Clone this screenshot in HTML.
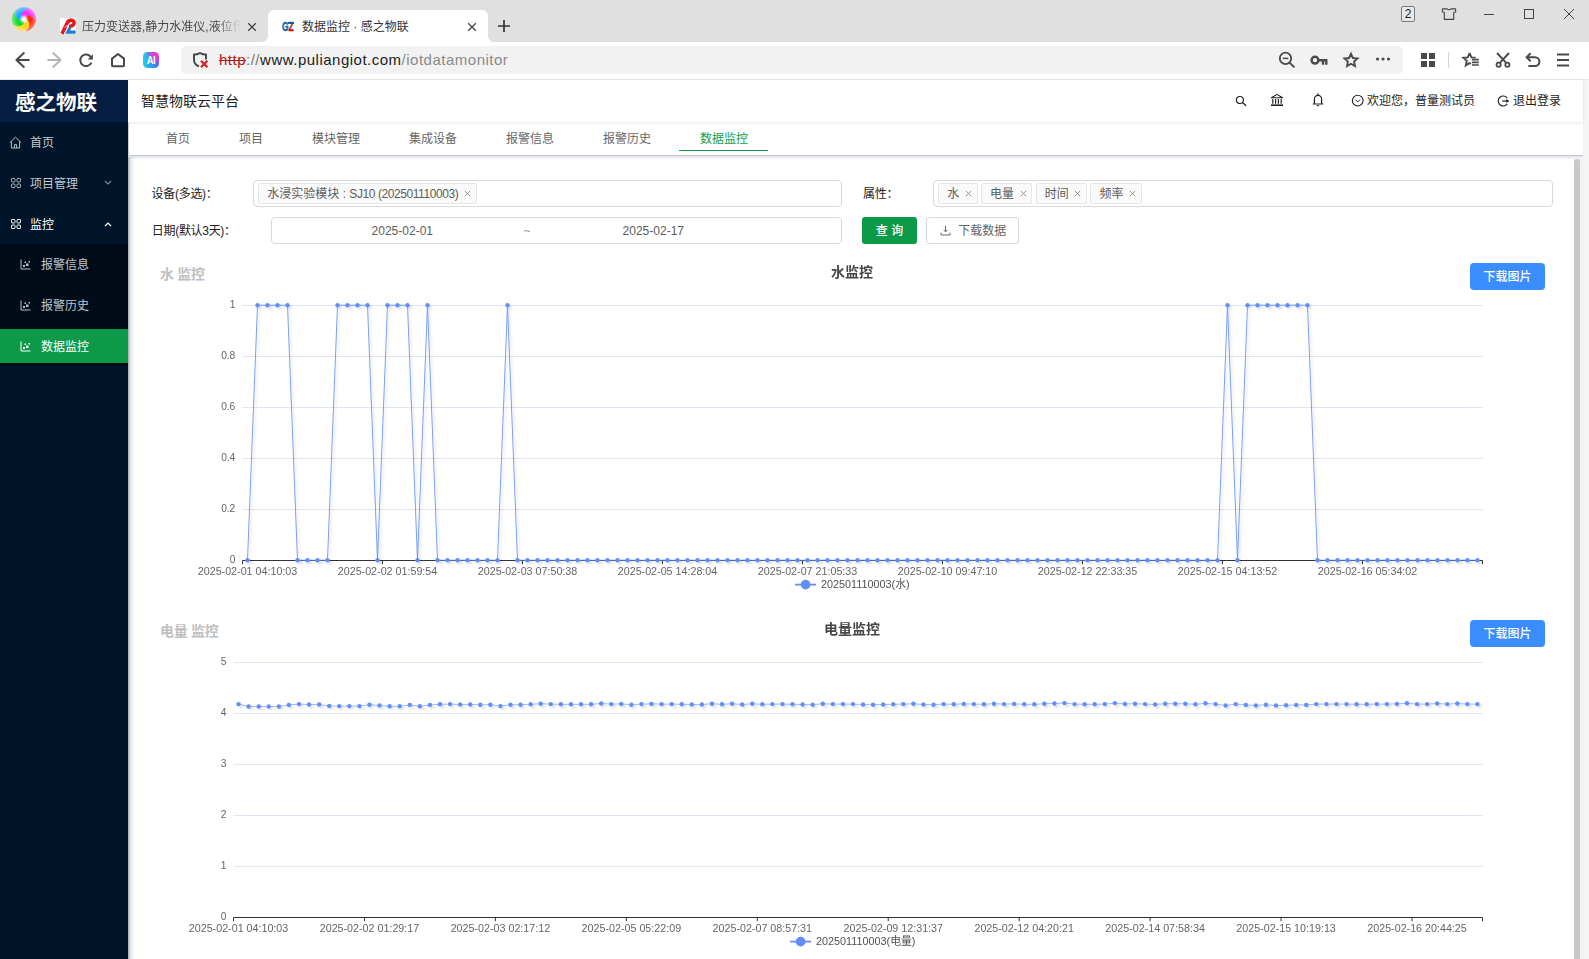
<!DOCTYPE html>
<html lang="zh-CN">
<head>
<meta charset="utf-8">
<title>数据监控 · 感之物联</title>
<style>
*{box-sizing:border-box;margin:0;padding:0}
html,body{width:1589px;height:959px;overflow:hidden;background:#fff}
body{position:relative;font-family:"Liberation Sans","Noto Sans CJK SC",sans-serif;font-size:12px;color:#333}
.t{position:absolute;white-space:nowrap}
.abs{position:absolute}
svg{position:absolute;overflow:visible}
.ax{font-family:"Liberation Sans","Noto Sans CJK SC",sans-serif;font-size:10.2px;fill:#656565}
.ttl{font-family:"Liberation Sans","Noto Sans CJK SC",sans-serif;font-size:14px;font-weight:bold;fill:#464646}
.lg{font-family:"Liberation Sans","Noto Sans CJK SC",sans-serif;font-size:10.8px;fill:#505050}
.tag{position:absolute;top:183px;height:21px;border:1px solid #e6e6e6;background:#fafafa;border-radius:2px}
.tg{top:184.2px;height:20px;line-height:20px;color:#5c5c5c}
.lb{height:20px;line-height:20px;color:#222;letter-spacing:-0.3px}
.inp{position:absolute;border:1px solid #d9d9d9;border-radius:4px;background:#fff}
</style>
</head>
<body>
<!-- ================= browser chrome ================= -->
<div class="abs" id="tabbar" style="left:0;top:0;width:1589px;height:42px;background:#e0e0e0"></div>
<div class="abs" id="toolbar" style="left:0;top:42px;width:1589px;height:38px;background:#fff;border-bottom:1px solid #e4e8ec"></div>
<!-- active tab -->
<div class="abs" style="left:268px;top:10px;width:220px;height:32px;background:#fff;border-radius:6px 6px 0 0"></div>
<svg style="left:262px;top:36px" width="6" height="6"><path d="M6 0 V6 H0 A6 6 0 0 0 6 0Z" fill="#fff"/></svg>
<svg style="left:488px;top:36px" width="6" height="6"><path d="M0 0 V6 H6 A6 6 0 0 1 0 0Z" fill="#fff"/></svg>
<!-- browser logo -->
<svg style="left:11.6px;top:7.2px" width="24" height="24" viewBox="0 0 24 24"><defs><filter id="lb" x="-20%" y="-20%" width="140%" height="140%"><feGaussianBlur stdDeviation="0.5"/></filter><filter id="lb2" x="-50%" y="-50%" width="200%" height="200%"><feGaussianBlur stdDeviation="0.9"/></filter><radialGradient id="lg"><stop offset="0.55" stop-color="#fff" stop-opacity="0"/><stop offset="1" stop-color="#fff" stop-opacity="0.38"/></radialGradient></defs><g filter="url(#lb)"><path d="M10.96 12.80 L9.89 13.17 L8.95 13.27 L8.06 13.18 L7.20 12.92 L6.39 12.52 L5.65 11.96 L4.98 11.28 L4.41 10.47 L3.94 9.55 L3.60 8.54 L3.39 7.44 L3.33 6.29 L3.41 5.08 L3.66 3.86 L5.06 2.65 L6.64 1.69 L8.35 0.98 L10.15 0.55 L12.00 0.40 L13.85 0.55 L15.65 0.98 L17.36 1.69 L16.11 1.83 L14.94 2.12 L13.86 2.54 L12.89 3.08 L12.03 3.72 L11.30 4.44 L10.71 5.24 L10.26 6.08 L9.97 6.96 L9.83 7.86 L9.85 8.75 L10.04 9.63 L10.43 10.49 L11.11 11.40Z" fill="#1fa6ff" stroke="#1fa6ff" stroke-width="0.3"/><path d="M11.11 11.40 L10.43 10.49 L10.04 9.63 L9.85 8.75 L9.83 7.86 L9.97 6.96 L10.26 6.08 L10.71 5.24 L11.30 4.44 L12.03 3.72 L12.89 3.08 L13.86 2.54 L14.94 2.12 L16.11 1.83 L17.36 1.69 L18.94 2.65 L20.34 3.86 L21.55 5.26 L22.51 6.84 L23.22 8.55 L23.65 10.35 L23.80 12.20 L23.65 14.05 L23.13 12.91 L22.49 11.89 L21.76 10.99 L20.95 10.23 L20.08 9.61 L19.16 9.14 L18.22 8.82 L17.28 8.66 L16.35 8.65 L15.46 8.79 L14.61 9.09 L13.84 9.55 L13.14 10.17 L12.49 11.10Z" fill="#f030f5" stroke="#f030f5" stroke-width="0.3"/><path d="M12.49 11.10 L13.14 10.17 L13.84 9.55 L14.61 9.09 L15.46 8.79 L16.35 8.65 L17.28 8.66 L18.22 8.82 L19.16 9.14 L20.08 9.61 L20.95 10.23 L21.76 10.99 L22.49 11.89 L23.13 12.91 L23.65 14.05 L23.22 15.85 L22.51 17.56 L21.55 19.14 L20.34 20.54 L18.94 21.75 L17.36 22.71 L15.65 23.42 L13.85 23.85 L14.77 23.00 L15.54 22.08 L16.17 21.11 L16.64 20.10 L16.96 19.08 L17.12 18.06 L17.14 17.07 L17.00 16.13 L16.72 15.24 L16.31 14.44 L15.76 13.73 L15.09 13.13 L14.28 12.66 L13.19 12.33Z" fill="#ff2415" stroke="#ff2415" stroke-width="0.3"/><path d="M13.19 12.33 L14.28 12.66 L15.09 13.13 L15.76 13.73 L16.31 14.44 L16.72 15.24 L17.00 16.13 L17.14 17.07 L17.12 18.06 L16.96 19.08 L16.64 20.10 L16.17 21.11 L15.54 22.08 L14.77 23.00 L13.85 23.85 L12.00 24.00 L10.15 23.85 L8.35 23.42 L6.64 22.71 L5.06 21.75 L3.66 20.54 L2.45 19.14 L1.49 17.56 L2.58 18.17 L3.70 18.62 L4.82 18.92 L5.92 19.06 L6.99 19.04 L8.01 18.89 L8.95 18.59 L9.81 18.17 L10.57 17.63 L11.20 16.99 L11.71 16.25 L12.07 15.43 L12.27 14.51 L12.25 13.37Z" fill="#ffd21a" stroke="#ffd21a" stroke-width="0.3"/><path d="M12.25 13.37 L12.27 14.51 L12.07 15.43 L11.71 16.25 L11.20 16.99 L10.57 17.63 L9.81 18.17 L8.95 18.59 L8.01 18.89 L6.99 19.04 L5.92 19.06 L4.82 18.92 L3.70 18.62 L2.58 18.17 L1.49 17.56 L0.78 15.85 L0.35 14.05 L0.20 12.20 L0.35 10.35 L0.78 8.55 L1.49 6.84 L2.45 5.26 L3.66 3.86 L3.41 5.08 L3.33 6.29 L3.39 7.44 L3.60 8.54 L3.94 9.55 L4.41 10.47 L4.98 11.28 L5.65 11.96 L6.39 12.52 L7.20 12.92 L8.06 13.18 L8.95 13.27 L9.89 13.17 L10.96 12.80Z" fill="#10dc25" stroke="#10dc25" stroke-width="0.3"/><circle cx="12" cy="12.2" r="11.9" fill="url(#lg)"/></g><circle cx="12" cy="12.2" r="3.1" fill="#fff" filter="url(#lb2)"/><circle cx="12" cy="12.2" r="1.7" fill="#fff"/></svg>
<!-- inactive tab -->
<svg style="left:60px;top:18px" width="16" height="16" viewBox="0 0 16 16"><rect width="16" height="16" fill="#fff"/><path d="M2 15.8 L6.9 5.4 C8 3 9.8 2 11.8 2.3 C14.2 2.7 14.7 4.8 13.6 6.4 C12.6 7.9 10.9 8.3 9 8.2" stroke="#e8141c" stroke-width="3.5" fill="none"/><path d="M4.6 9.3 L9.4 6.4" stroke="#fff" stroke-width="0.8"/><path d="M8.2 9.6 L11.6 9.6 L10.2 12.6 H15.6 V15.8 H5.2 Z" fill="#1b7fd6"/></svg>
<div class="t" style="left:82px;top:17px;height:20px;line-height:20px;font-size:12px;color:#4a4a4a;width:159px;overflow:hidden;-webkit-mask-image:linear-gradient(90deg,#000 0,#000 135px,transparent 159px);mask-image:linear-gradient(90deg,#000 0,#000 135px,transparent 159px)">压力变送器,静力水准仪,液位传感器</div>
<svg style="left:247px;top:22px" width="10" height="10" viewBox="0 0 10 10"><path d="M1.2 1.2 L8.8 8.8 M8.8 1.2 L1.2 8.8" stroke="#444" stroke-width="1.3" fill="none"/></svg>
<!-- active tab contents -->
<div class="t" style="left:281.8px;top:18px;height:16px;line-height:16px;font-size:12.4px;font-weight:bold;transform:translateY(0.9px) scaleX(0.68);transform-origin:0 50%;-webkit-text-stroke:0.5px currentColor"><span style="color:#0e64a8">G</span><span style="color:#cc0d0d">Z</span></div><div class="abs" style="left:288px;top:21.6px;width:6px;height:2px;background:#0e64a8"></div>
<div class="t" style="left:302px;top:17px;height:20px;line-height:20px;font-size:12px;color:#333">数据监控 · 感之物联</div>
<svg style="left:467px;top:22px" width="10" height="10" viewBox="0 0 10 10"><path d="M1.2 1.2 L8.8 8.8 M8.8 1.2 L1.2 8.8" stroke="#444" stroke-width="1.3" fill="none"/></svg>
<svg style="left:497px;top:19px" width="14" height="14" viewBox="0 0 14 14"><path d="M7 1 V13 M1 7 H13" stroke="#333" stroke-width="1.7" fill="none"/></svg>
<!-- window controls -->
<div class="abs" style="left:1401px;top:6px;width:14px;height:16px;border:1px solid #7a7a7a;border-radius:2px;background:#e8e8e8"></div>
<div class="t" style="left:1401px;top:6px;width:14px;height:16px;line-height:16px;font-size:12px;text-align:center;color:#222">2</div>
<svg style="left:1441px;top:7px" width="16" height="14" viewBox="0 0 16 14"><path d="M1.5 1.9 H6 Q8 3.7 10 1.9 H14.5 L14.7 5 L12.7 5.2 V12.4 H3.3 V5.2 L1.3 5 Z" fill="none" stroke="#444" stroke-width="1.1" stroke-linejoin="round"/></svg>
<svg style="left:1483px;top:8px" width="12" height="12" viewBox="0 0 12 12"><path d="M1 6.5 H11" stroke="#444" stroke-width="1"/></svg>
<svg style="left:1523px;top:8px" width="12" height="12" viewBox="0 0 12 12"><rect x="1.5" y="1.5" width="9" height="9" fill="none" stroke="#444" stroke-width="1"/></svg>
<svg style="left:1563px;top:8px" width="12" height="12" viewBox="0 0 12 12"><path d="M1 1 L11 11 M11 1 L1 11" stroke="#444" stroke-width="1" fill="none"/></svg>
<!-- toolbar nav icons -->
<svg style="left:13.7px;top:51px" width="18" height="18" viewBox="0 0 18 18"><path d="M10.4 1.6 L2.4 9 L10.4 16.4 M2.8 9 H15.6" stroke="#484848" stroke-width="2" fill="none" stroke-linejoin="round"/></svg>
<svg style="left:45px;top:51px" width="18" height="18" viewBox="0 0 18 18"><path d="M7.6 1.6 L15.6 9 L7.6 16.4 M15.2 9 H2.4" stroke="#b4b4b4" stroke-width="2" fill="none" stroke-linejoin="round"/></svg>
<svg style="left:77px;top:51.6px" width="18" height="18" viewBox="0 0 18 18"><path d="M14 5.2 A5.8 5.8 0 1 0 14.4 10.6" stroke="#484848" stroke-width="2" fill="none"/><path d="M15.9 2.2 V7.4 H10.7 Z" fill="#484848"/></svg>
<svg style="left:109px;top:51px" width="18" height="18" viewBox="0 0 18 18"><path d="M3 14.4 V7.6 L9 3 L15 7.6 V14.4 Q15 15.2 14.2 15.2 H3.8 Q3 15.2 3 14.4 Z" stroke="#484848" stroke-width="2" fill="none" stroke-linejoin="round"/></svg>
<div class="abs" style="left:143px;top:52px;width:16px;height:16px;border-radius:4.5px;background:radial-gradient(circle at 100% 0%,#ff3f86 0%,#dd3fd2 28%,rgba(130,90,250,0) 62%),linear-gradient(90deg,#1fd2e8 0%,#28a6f2 45%,#4068f8 100%)"></div>
<div class="t" style="left:143px;top:52px;width:16px;height:16px;line-height:16px;font-size:10.5px;font-weight:bold;color:#fff;text-align:center;letter-spacing:-0.4px;transform:translateY(0.2px) scaleX(0.9)">AI</div>
<!-- address bar -->
<div class="abs" style="left:181px;top:46px;width:1222px;height:28px;background:#f2f2f2;border-radius:5px"></div>
<svg style="left:191px;top:51px" width="20" height="18" viewBox="0 0 20 18"><path d="M9 1.8 Q5.8 3.8 3 3.6 V8.4 C3 11.8 5.2 14.4 8 15.4 M9 1.8 Q12.2 3.8 15 3.6 V8.4" stroke="#4a4a4a" stroke-width="2" fill="none" stroke-linejoin="round"/><path d="M10 9.8 L16.4 16.2 M16.4 9.8 L10 16.2" stroke="#d62222" stroke-width="2.3" fill="none"/></svg>
<div class="t" id="url" style="left:219px;top:49px;height:22px;line-height:22px;font-size:15px;letter-spacing:0.5px;color:#222"><span style="color:#b51717;text-decoration:line-through">http</span><span style="color:#777">://</span>www.puliangiot.com<span style="color:#8a8a8a">/iotdatamonitor</span></div>
<!-- address bar right icons -->
<svg style="left:1277px;top:50px" width="20" height="20" viewBox="0 0 20 20"><circle cx="8.5" cy="8.4" r="5.7" stroke="#4a4a4a" stroke-width="1.8" fill="none"/><path d="M12.6 12.6 L17.4 17.4" stroke="#4a4a4a" stroke-width="2"/><path d="M5.8 8.4 H11.2" stroke="#4a4a4a" stroke-width="1.5"/></svg>
<svg style="left:1310px;top:53px" width="18" height="14" viewBox="0 0 18 14"><circle cx="5" cy="7.2" r="3.4" stroke="#4a4a4a" stroke-width="2.5" fill="none"/><path d="M8.4 7.2 H17.4 M13 7.2 V11.8 M16.3 7.2 V11.8" stroke="#4a4a4a" stroke-width="2.4" fill="none"/></svg>
<svg style="left:1342px;top:50.6px" width="18" height="18" viewBox="0 0 18 18"><path d="M9 2.8 L10.9 7 L15.5 7.5 L12.1 10.6 L13 15.1 L9 12.8 L5 15.1 L5.9 10.6 L2.5 7.5 L7.1 7 Z" stroke="#4a4a4a" stroke-width="1.9" fill="none" stroke-linejoin="miter"/></svg>
<svg style="left:1375px;top:56.4px" width="16" height="6" viewBox="0 0 16 6"><circle cx="2.5" cy="3" r="1.55" fill="#4a4a4a"/><circle cx="8" cy="3" r="1.55" fill="#4a4a4a"/><circle cx="13.5" cy="3" r="1.55" fill="#4a4a4a"/></svg>
<!-- toolbar right icons -->
<svg style="left:1421px;top:53px" width="14" height="14" viewBox="0 0 14 14"><rect x="0" y="0" width="6" height="6" fill="#4a4a4a"/><rect x="8" y="0" width="6" height="6" fill="#4a4a4a"/><rect x="0" y="8" width="6" height="6" fill="#4a4a4a"/><rect x="8" y="8" width="6" height="6" fill="#4a4a4a"/></svg>
<div class="abs" style="left:1448px;top:52px;width:1px;height:16px;background:#d4d4d4"></div>
<svg style="left:1462px;top:51px" width="18" height="18" viewBox="0 0 18 18"><path d="M7.6 2 L9.4 6.4 L13.6 6.6 M7.6 2 L5.8 6.4 L1.4 6.8 L4.8 9.8 L3.8 14.4 L7.6 12 L9 12.8" stroke="#4a4a4a" stroke-width="1.9" fill="none" stroke-linejoin="miter"/><path d="M10 8.6 H16.8 M10 11.3 H16.8 M10 14 H16.8" stroke="#4a4a4a" stroke-width="1.7"/></svg>
<svg style="left:1495px;top:52px" width="16" height="16" viewBox="0 0 16 16"><path d="M2 1 L11.4 11.2 M14 1 L4.6 11.2" stroke="#4a4a4a" stroke-width="1.9" fill="none"/><circle cx="3.6" cy="12.8" r="2.1" stroke="#4a4a4a" stroke-width="1.8" fill="none"/><circle cx="12.4" cy="12.8" r="2.1" stroke="#4a4a4a" stroke-width="1.8" fill="none"/></svg>
<svg style="left:1525px;top:52px" width="16" height="16" viewBox="0 0 16 16"><path d="M2.4 5.2 H10 A4.4 4.4 0 0 1 10 14 H3.4" stroke="#4a4a4a" stroke-width="2" fill="none"/><path d="M5.6 1.2 L1.6 5.2 L5.6 9.2" stroke="#4a4a4a" stroke-width="2" fill="none"/></svg>
<svg style="left:1556px;top:53px" width="14" height="14" viewBox="0 0 14 14"><path d="M1 1.5 H13 M1 7 H13 M1 12.5 H13" stroke="#4a4a4a" stroke-width="2"/></svg>

<!-- ================= page ================= -->
<div class="abs" style="left:128px;top:80px;width:1455px;height:879px;background:#f0f2f5"></div>
<div class="abs" style="left:1583px;top:80px;width:6px;height:879px;background:#f5f5f5"></div>
<!-- content card -->
<div class="abs" style="left:130px;top:159px;width:1444px;height:800px;background:#fff"></div>
<!-- scrollbar thumb -->
<div class="abs" style="left:1574px;top:159px;width:6px;height:800px;background:#c8c8c8;border-radius:3px 3px 0 0"></div>
<!-- tab bar -->
<div class="abs" style="left:128px;top:122px;width:1455px;height:34px;background:#fff;border-bottom:1px solid #c6c9cd;box-shadow:0 1px 1px rgba(0,0,0,.06)"></div>
<div class="abs" style="left:128px;top:123px;width:1px;height:33px;background:#c9ccd0"></div>
<!-- header -->
<div class="abs" style="left:128px;top:80px;width:1455px;height:42px;background:#fff;box-shadow:0 1px 3px rgba(0,21,41,.10)"></div>
<div class="t" style="left:141px;top:91px;height:20px;line-height:20px;font-size:14px;color:#222">智慧物联云平台</div>
<!-- header icons -->
<svg style="left:1234px;top:94px" width="14" height="14" viewBox="0 0 14 14"><circle cx="5.9" cy="6" r="3.5" stroke="#222" stroke-width="1.2" fill="none"/><path d="M8.4 8.6 L12.2 11.8" stroke="#222" stroke-width="1.3"/></svg>
<svg style="left:1270px;top:93px" width="14" height="14" viewBox="0 0 14 14"><path d="M7 1.4 L12.6 4.8 H1.4 Z" fill="none" stroke="#222" stroke-width="1.1" stroke-linejoin="round"/><path d="M2.8 6 V10.8 M5.6 6 V10.8 M8.4 6 V10.8 M11.2 6 V10.8" stroke="#222" stroke-width="1.2"/><path d="M1 12.2 H13" stroke="#222" stroke-width="1.6"/></svg>
<svg style="left:1311px;top:92px" width="14" height="16" viewBox="0 0 14 16"><path d="M3.4 11.6 V7 A3.6 3.6 0 0 1 10.6 7 V11.6 M1.8 12 H12.2" stroke="#222" stroke-width="1.2" fill="none"/><path d="M5.4 13 L7 14.6 L8.6 13 Z" fill="#222"/><path d="M7 1.6 V3.4" stroke="#222" stroke-width="1.4"/></svg>
<svg style="left:1351px;top:94px" width="14" height="14" viewBox="0 0 14 14"><circle cx="6.7" cy="6.6" r="5.4" stroke="#222" stroke-width="1.1" fill="none"/><path d="M4.5 5.6 L6.7 8 L9 5.6" stroke="#222" stroke-width="1" fill="none"/></svg>
<div class="t" style="left:1367px;top:91px;height:20px;line-height:20px;font-size:12px;color:#222">欢迎您，普量测试员</div>
<svg style="left:1497px;top:94.6px" width="14" height="12" viewBox="0 0 14 12"><path d="M10.3 3.1 A5 5 0 1 0 10.3 8.9" stroke="#222" stroke-width="1.15" fill="none"/><path d="M5.2 6 H10" stroke="#222" stroke-width="1.2"/><path d="M9.4 4 L12.4 6 L9.4 8 Z" fill="#222"/></svg>
<div class="t" style="left:1513px;top:91px;height:20px;line-height:20px;font-size:12px;color:#222">退出登录</div>
<!-- page tabs -->
<div class="t" style="left:166px;top:129px;transform:translateY(0.35px);height:20px;line-height:20px;color:#666">首页</div>
<div class="t" style="left:239px;top:129px;transform:translateY(0.35px);height:20px;line-height:20px;color:#666">项目</div>
<div class="t" style="left:312px;top:129px;transform:translateY(0.35px);height:20px;line-height:20px;color:#666">模块管理</div>
<div class="t" style="left:409px;top:129px;transform:translateY(0.35px);height:20px;line-height:20px;color:#666">集成设备</div>
<div class="t" style="left:506px;top:129px;transform:translateY(0.35px);height:20px;line-height:20px;color:#666">报警信息</div>
<div class="t" style="left:603px;top:129px;transform:translateY(0.35px);height:20px;line-height:20px;color:#666">报警历史</div>
<div class="t" style="left:700px;top:129px;transform:translateY(0.35px);height:20px;line-height:20px;color:#0e9e4b">数据监控</div>
<div class="abs" style="left:679px;top:150px;width:89px;height:1px;background:#0e9e4b"></div>

<!-- sidebar -->
<div class="abs" style="left:0;top:80px;width:128px;height:879px;background:#001529"></div>
<div class="abs" style="left:128px;top:157px;width:7px;height:802px;background:linear-gradient(90deg,rgba(0,21,41,.30),rgba(0,21,41,.10) 35%,rgba(0,21,41,0))"></div>
<div class="abs" style="left:0;top:80px;width:128px;height:42px;background:#051e41"></div>
<div class="t" style="left:15px;top:89px;height:28px;line-height:28px;font-size:20.5px;font-weight:bold;color:#fff">感之物联</div>
<div class="abs" style="left:0;top:244px;width:128px;height:122px;background:#000c17"></div>
<div class="abs" style="left:0;top:329px;width:128px;height:34px;background:#0c9a48"></div>
<!-- sidebar icons -->
<svg style="left:9.2px;top:136.2px" width="13" height="13" viewBox="0 0 13 13"><path d="M0.8 6.6 L6.5 1.2 L12.2 6.6 M2.4 5.6 V12 H10.6 V5.6 M5.4 12 V8.6 H7.6 V12" stroke="#b7bdc6" stroke-width="1" fill="none"/></svg>
<svg style="left:11px;top:178px" width="10" height="10" viewBox="0 0 10 10"><rect x=".5" y=".5" width="3.5" height="3.5" rx=".6" stroke="#a9b0b9" fill="none"/><rect x="6" y=".5" width="3.5" height="3.5" rx=".6" stroke="#a9b0b9" fill="none"/><rect x=".5" y="6" width="3.5" height="3.5" rx=".6" stroke="#a9b0b9" fill="none"/><rect x="6" y="6" width="3.5" height="3.5" rx=".6" stroke="#a9b0b9" fill="none"/></svg>
<svg style="left:11px;top:219px" width="10" height="10" viewBox="0 0 10 10"><rect x=".5" y=".5" width="3.5" height="3.5" rx=".6" stroke="#fff" fill="none"/><rect x="6" y=".5" width="3.5" height="3.5" rx=".6" stroke="#fff" fill="none"/><rect x=".5" y="6" width="3.5" height="3.5" rx=".6" stroke="#fff" fill="none"/><rect x="6" y="6" width="3.5" height="3.5" rx=".6" stroke="#fff" fill="none"/></svg>
<div class="t" style="left:30px;top:132.9px;height:20px;line-height:20px;color:#c3c8cf">首页</div>
<div class="t" style="left:30px;top:173.9px;height:20px;line-height:20px;color:#c3c8cf">项目管理</div>
<div class="t" style="left:30px;top:214.9px;height:20px;line-height:20px;color:#fff">监控</div>
<svg style="left:103.5px;top:180px" width="8" height="6" viewBox="0 0 8 6"><path d="M1 1 L4 4 L7 1" stroke="#7f8995" stroke-width="1.2" fill="none"/></svg>
<svg style="left:103.5px;top:220.5px" width="8" height="6" viewBox="0 0 8 6"><path d="M1 5 L4 2 L7 5" stroke="#fff" stroke-width="1.2" fill="none"/></svg>
<svg style="left:20px;top:259px" width="11" height="11" viewBox="0 0 11 11"><path d="M1 .5 V10 H10.5" stroke="#b7bdc6" stroke-width="1" fill="none"/><rect x="3" y="6" width="2" height="2" fill="#b7bdc6"/><rect x="6" y="4.5" width="2.5" height="2.5" fill="#b7bdc6"/><rect x="4.5" y="2.5" width="1.5" height="1.5" fill="#b7bdc6"/><rect x="8.5" y="2" width="1.5" height="1.5" fill="#b7bdc6"/></svg>
<svg style="left:20px;top:300px" width="11" height="11" viewBox="0 0 11 11"><path d="M1 .5 V10 H10.5" stroke="#b7bdc6" stroke-width="1" fill="none"/><rect x="3" y="6" width="2" height="2" fill="#b7bdc6"/><rect x="6" y="4.5" width="2.5" height="2.5" fill="#b7bdc6"/><rect x="4.5" y="2.5" width="1.5" height="1.5" fill="#b7bdc6"/><rect x="8.5" y="2" width="1.5" height="1.5" fill="#b7bdc6"/></svg>
<svg style="left:20px;top:341px" width="11" height="11" viewBox="0 0 11 11"><path d="M1 .5 V10 H10.5" stroke="#fff" stroke-width="1" fill="none"/><rect x="3" y="6" width="2" height="2" fill="#fff"/><rect x="6" y="4.5" width="2.5" height="2.5" fill="#fff"/><rect x="4.5" y="2.5" width="1.5" height="1.5" fill="#fff"/><rect x="8.5" y="2" width="1.5" height="1.5" fill="#fff"/></svg>
<div class="t" style="left:41px;top:255.1px;height:20px;line-height:20px;color:#c3c8cf">报警信息</div>
<div class="t" style="left:41px;top:296.1px;height:20px;line-height:20px;color:#c3c8cf">报警历史</div>
<div class="t" style="left:41px;top:337.1px;height:20px;line-height:20px;color:#fff">数据监控</div>

<!-- ================= form ================= -->
<div class="t lb" style="left:151.6px;top:184px">设备(多选)：</div>
<div class="inp" style="left:253px;top:180px;width:589px;height:26.5px"></div>
<div class="tag" style="left:258.3px;width:218.5px"></div><div class="t tg" style="left:267.3px">水浸实验模块 : <span id="sj" style="letter-spacing:-0.42px">SJ10 (202501110003)</span></div><svg style="left:463.6px;top:190.1px" width="7" height="7" viewBox="0 0 7 7"><path d="M.8 .8 L6.2 6.2 M6.2 .8 L.8 6.2" stroke="#8a8a8a" stroke-width="0.9" fill="none"/></svg>
<div class="t lb" style="left:151.8px;top:221px">日期(默认3天)：</div>
<div class="inp" style="left:271px;top:217px;width:571px;height:27px"></div>
<div class="t" style="left:352.3px;top:220.6px;width:100px;height:20px;line-height:20px;text-align:center;color:#5c5c5c">2025-02-01</div>
<div class="t" style="left:517px;top:220.6px;width:20px;height:20px;line-height:20px;text-align:center;color:#999">~</div>
<div class="t" style="left:603.3px;top:220.6px;width:100px;height:20px;line-height:20px;text-align:center;color:#5c5c5c">2025-02-17</div>
<div class="t lb" style="left:863px;top:184px">属性：</div>
<div class="inp" style="left:933px;top:180px;width:620px;height:26.5px"></div>
<div class="tag" style="left:938.3px;width:39.3px"></div><div class="t tg" style="left:947.2px">水</div><svg style="left:964.6px;top:190.1px" width="7" height="7" viewBox="0 0 7 7"><path d="M.8 .8 L6.2 6.2 M6.2 .8 L.8 6.2" stroke="#8a8a8a" stroke-width="0.9" fill="none"/></svg>
<div class="tag" style="left:981.4px;width:50.6px"></div><div class="t tg" style="left:990px">电量</div><svg style="left:1019.7px;top:190.1px" width="7" height="7" viewBox="0 0 7 7"><path d="M.8 .8 L6.2 6.2 M6.2 .8 L.8 6.2" stroke="#8a8a8a" stroke-width="0.9" fill="none"/></svg>
<div class="tag" style="left:1036.2px;width:50.7px"></div><div class="t tg" style="left:1044.8px">时间</div><svg style="left:1073.5px;top:190.1px" width="7" height="7" viewBox="0 0 7 7"><path d="M.8 .8 L6.2 6.2 M6.2 .8 L.8 6.2" stroke="#8a8a8a" stroke-width="0.9" fill="none"/></svg>
<div class="tag" style="left:1090.3px;width:51.5px"></div><div class="t tg" style="left:1099.5px">频率</div><svg style="left:1128.6px;top:190.1px" width="7" height="7" viewBox="0 0 7 7"><path d="M.8 .8 L6.2 6.2 M6.2 .8 L.8 6.2" stroke="#8a8a8a" stroke-width="0.9" fill="none"/></svg>
<div class="abs" style="left:862px;top:217px;width:55px;height:27px;background:#0c9a48;border-radius:3px"></div>
<div class="t" style="left:862px;top:220.6px;width:55px;height:20px;line-height:20px;text-align:center;color:#fff;font-weight:500">查 询</div>
<div class="inp" style="left:926px;top:217px;width:93px;height:27px;border-radius:3px"></div>
<svg style="left:939.6px;top:225px" width="11" height="11" viewBox="0 0 11 11"><path d="M5.5 .8 V6.8 M3.5 4.9 L5.5 6.9 L7.5 4.9 M1 7.6 V10 H10 V7.6" stroke="#666" stroke-width="1" fill="none"/></svg>
<div class="t" style="left:958.3px;top:220.6px;height:20px;line-height:20px;color:#666">下载数据</div>

<!-- ================= charts ================= -->
<div class="t" style="left:160px;top:264px;height:20px;line-height:20px;font-size:14px;font-weight:bold;letter-spacing:-0.3px;color:#c0c0c0">水 监控</div>
<div class="t" style="left:160px;top:621px;height:20px;line-height:20px;font-size:14px;font-weight:bold;letter-spacing:-0.3px;color:#c0c0c0">电量 监控</div>
<div class="abs" style="left:1470px;top:263px;width:75px;height:27px;background:#3a8dff;border-radius:4px"></div>
<div class="t" style="left:1470px;top:266.5px;width:75px;height:20px;line-height:20px;text-align:center;color:#fff;font-weight:500">下载图片</div>
<div class="abs" style="left:1470px;top:620px;width:75px;height:27px;background:#3a8dff;border-radius:4px"></div>
<div class="t" style="left:1470px;top:623.5px;width:75px;height:20px;line-height:20px;text-align:center;color:#fff;font-weight:500">下载图片</div>
<svg style="left:0;top:0;will-change:transform" width="1589" height="959" viewBox="0 0 1589 959">
<defs><filter id="sh" x="-2%" y="-5%" width="104%" height="115%"><feDropShadow dx="2" dy="2" stdDeviation="1.1" flood-color="#000" flood-opacity="0.13"/></filter></defs>
<text x="235.3" y="562.8" text-anchor="end" class="ax">0</text>
<line x1="242.5" y1="509.5" x2="1482.5" y2="509.5" stroke="#e0e6f1" stroke-width="1"/>
<text x="235.3" y="511.8" text-anchor="end" class="ax">0.2</text>
<line x1="242.5" y1="458.5" x2="1482.5" y2="458.5" stroke="#e0e6f1" stroke-width="1"/>
<text x="235.3" y="460.8" text-anchor="end" class="ax">0.4</text>
<line x1="242.5" y1="407.5" x2="1482.5" y2="407.5" stroke="#e0e6f1" stroke-width="1"/>
<text x="235.3" y="409.8" text-anchor="end" class="ax">0.6</text>
<line x1="242.5" y1="356.5" x2="1482.5" y2="356.5" stroke="#e0e6f1" stroke-width="1"/>
<text x="235.3" y="358.8" text-anchor="end" class="ax">0.8</text>
<line x1="242.5" y1="305.5" x2="1482.5" y2="305.5" stroke="#e0e6f1" stroke-width="1"/>
<text x="235.3" y="307.8" text-anchor="end" class="ax">1</text>
<line x1="242.5" y1="560.5" x2="1482.5" y2="560.5" stroke="#333" stroke-width="1"/>
<line x1="242.50" y1="560.5" x2="242.50" y2="564.2" stroke="#333" stroke-width="1"/>
<text x="247.50" y="574.7" text-anchor="middle" class="ax" textLength="99.5" lengthAdjust="spacingAndGlyphs">2025-02-01 04:10:03</text>
<line x1="382.50" y1="560.5" x2="382.50" y2="564.2" stroke="#333" stroke-width="1"/>
<text x="387.50" y="574.7" text-anchor="middle" class="ax" textLength="99.5" lengthAdjust="spacingAndGlyphs">2025-02-02 01:59:54</text>
<line x1="522.50" y1="560.5" x2="522.50" y2="564.2" stroke="#333" stroke-width="1"/>
<text x="527.50" y="574.7" text-anchor="middle" class="ax" textLength="99.5" lengthAdjust="spacingAndGlyphs">2025-02-03 07:50:38</text>
<line x1="662.50" y1="560.5" x2="662.50" y2="564.2" stroke="#333" stroke-width="1"/>
<text x="667.50" y="574.7" text-anchor="middle" class="ax" textLength="99.5" lengthAdjust="spacingAndGlyphs">2025-02-05 14:28:04</text>
<line x1="802.50" y1="560.5" x2="802.50" y2="564.2" stroke="#333" stroke-width="1"/>
<text x="807.50" y="574.7" text-anchor="middle" class="ax" textLength="99.5" lengthAdjust="spacingAndGlyphs">2025-02-07 21:05:33</text>
<line x1="942.50" y1="560.5" x2="942.50" y2="564.2" stroke="#333" stroke-width="1"/>
<text x="947.50" y="574.7" text-anchor="middle" class="ax" textLength="99.5" lengthAdjust="spacingAndGlyphs">2025-02-10 09:47:10</text>
<line x1="1082.50" y1="560.5" x2="1082.50" y2="564.2" stroke="#333" stroke-width="1"/>
<text x="1087.50" y="574.7" text-anchor="middle" class="ax" textLength="99.5" lengthAdjust="spacingAndGlyphs">2025-02-12 22:33:35</text>
<line x1="1222.50" y1="560.5" x2="1222.50" y2="564.2" stroke="#333" stroke-width="1"/>
<text x="1227.50" y="574.7" text-anchor="middle" class="ax" textLength="99.5" lengthAdjust="spacingAndGlyphs">2025-02-15 04:13:52</text>
<line x1="1362.50" y1="560.5" x2="1362.50" y2="564.2" stroke="#333" stroke-width="1"/>
<text x="1367.50" y="574.7" text-anchor="middle" class="ax" textLength="99.5" lengthAdjust="spacingAndGlyphs">2025-02-16 05:34:02</text>
<line x1="1482.5" y1="560.5" x2="1482.5" y2="564.2" stroke="#333" stroke-width="1"/>
<g filter="url(#sh)"><polyline points="247.50,560.20 257.50,305.20 267.50,305.20 277.50,305.20 287.50,305.20 297.50,560.20 307.50,560.20 317.50,560.20 327.50,560.20 337.50,305.20 347.50,305.20 357.50,305.20 367.50,305.20 377.50,560.20 387.50,305.20 397.50,305.20 407.50,305.20 417.50,560.20 427.50,305.20 437.50,560.20 447.50,560.20 457.50,560.20 467.50,560.20 477.50,560.20 487.50,560.20 497.50,560.20 507.50,305.20 517.50,560.20 527.50,560.20 537.50,560.20 547.50,560.20 557.50,560.20 567.50,560.20 577.50,560.20 587.50,560.20 597.50,560.20 607.50,560.20 617.50,560.20 627.50,560.20 637.50,560.20 647.50,560.20 657.50,560.20 667.50,560.20 677.50,560.20 687.50,560.20 697.50,560.20 707.50,560.20 717.50,560.20 727.50,560.20 737.50,560.20 747.50,560.20 757.50,560.20 767.50,560.20 777.50,560.20 787.50,560.20 797.50,560.20 807.50,560.20 817.50,560.20 827.50,560.20 837.50,560.20 847.50,560.20 857.50,560.20 867.50,560.20 877.50,560.20 887.50,560.20 897.50,560.20 907.50,560.20 917.50,560.20 927.50,560.20 937.50,560.20 947.50,560.20 957.50,560.20 967.50,560.20 977.50,560.20 987.50,560.20 997.50,560.20 1007.50,560.20 1017.50,560.20 1027.50,560.20 1037.50,560.20 1047.50,560.20 1057.50,560.20 1067.50,560.20 1077.50,560.20 1087.50,560.20 1097.50,560.20 1107.50,560.20 1117.50,560.20 1127.50,560.20 1137.50,560.20 1147.50,560.20 1157.50,560.20 1167.50,560.20 1177.50,560.20 1187.50,560.20 1197.50,560.20 1207.50,560.20 1217.50,560.20 1227.50,305.20 1237.50,560.20 1247.50,305.20 1257.50,305.20 1267.50,305.20 1277.50,305.20 1287.50,305.20 1297.50,305.20 1307.50,305.20 1317.50,560.20 1327.50,560.20 1337.50,560.20 1347.50,560.20 1357.50,560.20 1367.50,560.20 1377.50,560.20 1387.50,560.20 1397.50,560.20 1407.50,560.20 1417.50,560.20 1427.50,560.20 1437.50,560.20 1447.50,560.20 1457.50,560.20 1467.50,560.20 1477.50,560.20" fill="none" stroke="#638ef6" stroke-width="1" stroke-opacity="0.86" stroke-linejoin="bevel"/>
<circle cx="247.50" cy="560.20" r="2.2" fill="#638ef6"/>
<circle cx="257.50" cy="305.20" r="2.2" fill="#638ef6"/>
<circle cx="267.50" cy="305.20" r="2.2" fill="#638ef6"/>
<circle cx="277.50" cy="305.20" r="2.2" fill="#638ef6"/>
<circle cx="287.50" cy="305.20" r="2.2" fill="#638ef6"/>
<circle cx="297.50" cy="560.20" r="2.2" fill="#638ef6"/>
<circle cx="307.50" cy="560.20" r="2.2" fill="#638ef6"/>
<circle cx="317.50" cy="560.20" r="2.2" fill="#638ef6"/>
<circle cx="327.50" cy="560.20" r="2.2" fill="#638ef6"/>
<circle cx="337.50" cy="305.20" r="2.2" fill="#638ef6"/>
<circle cx="347.50" cy="305.20" r="2.2" fill="#638ef6"/>
<circle cx="357.50" cy="305.20" r="2.2" fill="#638ef6"/>
<circle cx="367.50" cy="305.20" r="2.2" fill="#638ef6"/>
<circle cx="377.50" cy="560.20" r="2.2" fill="#638ef6"/>
<circle cx="387.50" cy="305.20" r="2.2" fill="#638ef6"/>
<circle cx="397.50" cy="305.20" r="2.2" fill="#638ef6"/>
<circle cx="407.50" cy="305.20" r="2.2" fill="#638ef6"/>
<circle cx="417.50" cy="560.20" r="2.2" fill="#638ef6"/>
<circle cx="427.50" cy="305.20" r="2.2" fill="#638ef6"/>
<circle cx="437.50" cy="560.20" r="2.2" fill="#638ef6"/>
<circle cx="447.50" cy="560.20" r="2.2" fill="#638ef6"/>
<circle cx="457.50" cy="560.20" r="2.2" fill="#638ef6"/>
<circle cx="467.50" cy="560.20" r="2.2" fill="#638ef6"/>
<circle cx="477.50" cy="560.20" r="2.2" fill="#638ef6"/>
<circle cx="487.50" cy="560.20" r="2.2" fill="#638ef6"/>
<circle cx="497.50" cy="560.20" r="2.2" fill="#638ef6"/>
<circle cx="507.50" cy="305.20" r="2.2" fill="#638ef6"/>
<circle cx="517.50" cy="560.20" r="2.2" fill="#638ef6"/>
<circle cx="527.50" cy="560.20" r="2.2" fill="#638ef6"/>
<circle cx="537.50" cy="560.20" r="2.2" fill="#638ef6"/>
<circle cx="547.50" cy="560.20" r="2.2" fill="#638ef6"/>
<circle cx="557.50" cy="560.20" r="2.2" fill="#638ef6"/>
<circle cx="567.50" cy="560.20" r="2.2" fill="#638ef6"/>
<circle cx="577.50" cy="560.20" r="2.2" fill="#638ef6"/>
<circle cx="587.50" cy="560.20" r="2.2" fill="#638ef6"/>
<circle cx="597.50" cy="560.20" r="2.2" fill="#638ef6"/>
<circle cx="607.50" cy="560.20" r="2.2" fill="#638ef6"/>
<circle cx="617.50" cy="560.20" r="2.2" fill="#638ef6"/>
<circle cx="627.50" cy="560.20" r="2.2" fill="#638ef6"/>
<circle cx="637.50" cy="560.20" r="2.2" fill="#638ef6"/>
<circle cx="647.50" cy="560.20" r="2.2" fill="#638ef6"/>
<circle cx="657.50" cy="560.20" r="2.2" fill="#638ef6"/>
<circle cx="667.50" cy="560.20" r="2.2" fill="#638ef6"/>
<circle cx="677.50" cy="560.20" r="2.2" fill="#638ef6"/>
<circle cx="687.50" cy="560.20" r="2.2" fill="#638ef6"/>
<circle cx="697.50" cy="560.20" r="2.2" fill="#638ef6"/>
<circle cx="707.50" cy="560.20" r="2.2" fill="#638ef6"/>
<circle cx="717.50" cy="560.20" r="2.2" fill="#638ef6"/>
<circle cx="727.50" cy="560.20" r="2.2" fill="#638ef6"/>
<circle cx="737.50" cy="560.20" r="2.2" fill="#638ef6"/>
<circle cx="747.50" cy="560.20" r="2.2" fill="#638ef6"/>
<circle cx="757.50" cy="560.20" r="2.2" fill="#638ef6"/>
<circle cx="767.50" cy="560.20" r="2.2" fill="#638ef6"/>
<circle cx="777.50" cy="560.20" r="2.2" fill="#638ef6"/>
<circle cx="787.50" cy="560.20" r="2.2" fill="#638ef6"/>
<circle cx="797.50" cy="560.20" r="2.2" fill="#638ef6"/>
<circle cx="807.50" cy="560.20" r="2.2" fill="#638ef6"/>
<circle cx="817.50" cy="560.20" r="2.2" fill="#638ef6"/>
<circle cx="827.50" cy="560.20" r="2.2" fill="#638ef6"/>
<circle cx="837.50" cy="560.20" r="2.2" fill="#638ef6"/>
<circle cx="847.50" cy="560.20" r="2.2" fill="#638ef6"/>
<circle cx="857.50" cy="560.20" r="2.2" fill="#638ef6"/>
<circle cx="867.50" cy="560.20" r="2.2" fill="#638ef6"/>
<circle cx="877.50" cy="560.20" r="2.2" fill="#638ef6"/>
<circle cx="887.50" cy="560.20" r="2.2" fill="#638ef6"/>
<circle cx="897.50" cy="560.20" r="2.2" fill="#638ef6"/>
<circle cx="907.50" cy="560.20" r="2.2" fill="#638ef6"/>
<circle cx="917.50" cy="560.20" r="2.2" fill="#638ef6"/>
<circle cx="927.50" cy="560.20" r="2.2" fill="#638ef6"/>
<circle cx="937.50" cy="560.20" r="2.2" fill="#638ef6"/>
<circle cx="947.50" cy="560.20" r="2.2" fill="#638ef6"/>
<circle cx="957.50" cy="560.20" r="2.2" fill="#638ef6"/>
<circle cx="967.50" cy="560.20" r="2.2" fill="#638ef6"/>
<circle cx="977.50" cy="560.20" r="2.2" fill="#638ef6"/>
<circle cx="987.50" cy="560.20" r="2.2" fill="#638ef6"/>
<circle cx="997.50" cy="560.20" r="2.2" fill="#638ef6"/>
<circle cx="1007.50" cy="560.20" r="2.2" fill="#638ef6"/>
<circle cx="1017.50" cy="560.20" r="2.2" fill="#638ef6"/>
<circle cx="1027.50" cy="560.20" r="2.2" fill="#638ef6"/>
<circle cx="1037.50" cy="560.20" r="2.2" fill="#638ef6"/>
<circle cx="1047.50" cy="560.20" r="2.2" fill="#638ef6"/>
<circle cx="1057.50" cy="560.20" r="2.2" fill="#638ef6"/>
<circle cx="1067.50" cy="560.20" r="2.2" fill="#638ef6"/>
<circle cx="1077.50" cy="560.20" r="2.2" fill="#638ef6"/>
<circle cx="1087.50" cy="560.20" r="2.2" fill="#638ef6"/>
<circle cx="1097.50" cy="560.20" r="2.2" fill="#638ef6"/>
<circle cx="1107.50" cy="560.20" r="2.2" fill="#638ef6"/>
<circle cx="1117.50" cy="560.20" r="2.2" fill="#638ef6"/>
<circle cx="1127.50" cy="560.20" r="2.2" fill="#638ef6"/>
<circle cx="1137.50" cy="560.20" r="2.2" fill="#638ef6"/>
<circle cx="1147.50" cy="560.20" r="2.2" fill="#638ef6"/>
<circle cx="1157.50" cy="560.20" r="2.2" fill="#638ef6"/>
<circle cx="1167.50" cy="560.20" r="2.2" fill="#638ef6"/>
<circle cx="1177.50" cy="560.20" r="2.2" fill="#638ef6"/>
<circle cx="1187.50" cy="560.20" r="2.2" fill="#638ef6"/>
<circle cx="1197.50" cy="560.20" r="2.2" fill="#638ef6"/>
<circle cx="1207.50" cy="560.20" r="2.2" fill="#638ef6"/>
<circle cx="1217.50" cy="560.20" r="2.2" fill="#638ef6"/>
<circle cx="1227.50" cy="305.20" r="2.2" fill="#638ef6"/>
<circle cx="1237.50" cy="560.20" r="2.2" fill="#638ef6"/>
<circle cx="1247.50" cy="305.20" r="2.2" fill="#638ef6"/>
<circle cx="1257.50" cy="305.20" r="2.2" fill="#638ef6"/>
<circle cx="1267.50" cy="305.20" r="2.2" fill="#638ef6"/>
<circle cx="1277.50" cy="305.20" r="2.2" fill="#638ef6"/>
<circle cx="1287.50" cy="305.20" r="2.2" fill="#638ef6"/>
<circle cx="1297.50" cy="305.20" r="2.2" fill="#638ef6"/>
<circle cx="1307.50" cy="305.20" r="2.2" fill="#638ef6"/>
<circle cx="1317.50" cy="560.20" r="2.2" fill="#638ef6"/>
<circle cx="1327.50" cy="560.20" r="2.2" fill="#638ef6"/>
<circle cx="1337.50" cy="560.20" r="2.2" fill="#638ef6"/>
<circle cx="1347.50" cy="560.20" r="2.2" fill="#638ef6"/>
<circle cx="1357.50" cy="560.20" r="2.2" fill="#638ef6"/>
<circle cx="1367.50" cy="560.20" r="2.2" fill="#638ef6"/>
<circle cx="1377.50" cy="560.20" r="2.2" fill="#638ef6"/>
<circle cx="1387.50" cy="560.20" r="2.2" fill="#638ef6"/>
<circle cx="1397.50" cy="560.20" r="2.2" fill="#638ef6"/>
<circle cx="1407.50" cy="560.20" r="2.2" fill="#638ef6"/>
<circle cx="1417.50" cy="560.20" r="2.2" fill="#638ef6"/>
<circle cx="1427.50" cy="560.20" r="2.2" fill="#638ef6"/>
<circle cx="1437.50" cy="560.20" r="2.2" fill="#638ef6"/>
<circle cx="1447.50" cy="560.20" r="2.2" fill="#638ef6"/>
<circle cx="1457.50" cy="560.20" r="2.2" fill="#638ef6"/>
<circle cx="1467.50" cy="560.20" r="2.2" fill="#638ef6"/>
<circle cx="1477.50" cy="560.20" r="2.2" fill="#638ef6"/>
</g>
<text x="852" y="277" text-anchor="middle" class="ttl">水监控</text>
<line x1="795.1" y1="584.6" x2="816.1" y2="584.6" stroke="#638ef6" stroke-width="1.8"/>
<circle cx="805.6" cy="584.6" r="4.9" fill="#638ef6"/>
<text x="821.1" y="588.3000000000001" class="lg">202501110003(水)</text>
<text x="226.3" y="919.8" text-anchor="end" class="ax">0</text>
<line x1="233.5" y1="866.5" x2="1482.5" y2="866.5" stroke="#e0e6f1" stroke-width="1"/>
<text x="226.3" y="868.8" text-anchor="end" class="ax">1</text>
<line x1="233.5" y1="815.5" x2="1482.5" y2="815.5" stroke="#e0e6f1" stroke-width="1"/>
<text x="226.3" y="817.8" text-anchor="end" class="ax">2</text>
<line x1="233.5" y1="764.5" x2="1482.5" y2="764.5" stroke="#e0e6f1" stroke-width="1"/>
<text x="226.3" y="766.8" text-anchor="end" class="ax">3</text>
<line x1="233.5" y1="713.5" x2="1482.5" y2="713.5" stroke="#e0e6f1" stroke-width="1"/>
<text x="226.3" y="715.8" text-anchor="end" class="ax">4</text>
<line x1="233.5" y1="662.5" x2="1482.5" y2="662.5" stroke="#e0e6f1" stroke-width="1"/>
<text x="226.3" y="664.8" text-anchor="end" class="ax">5</text>
<line x1="233.5" y1="917.5" x2="1482.5" y2="917.5" stroke="#333" stroke-width="1"/>
<line x1="233.50" y1="917.5" x2="233.50" y2="921.2" stroke="#333" stroke-width="1"/>
<text x="238.54" y="931.7" text-anchor="middle" class="ax" textLength="99.5" lengthAdjust="spacingAndGlyphs">2025-02-01 04:10:03</text>
<line x1="364.44" y1="917.5" x2="364.44" y2="921.2" stroke="#333" stroke-width="1"/>
<text x="369.48" y="931.7" text-anchor="middle" class="ax" textLength="99.5" lengthAdjust="spacingAndGlyphs">2025-02-02 01:29:17</text>
<line x1="495.39" y1="917.5" x2="495.39" y2="921.2" stroke="#333" stroke-width="1"/>
<text x="500.42" y="931.7" text-anchor="middle" class="ax" textLength="99.5" lengthAdjust="spacingAndGlyphs">2025-02-03 02:17:12</text>
<line x1="626.33" y1="917.5" x2="626.33" y2="921.2" stroke="#333" stroke-width="1"/>
<text x="631.37" y="931.7" text-anchor="middle" class="ax" textLength="99.5" lengthAdjust="spacingAndGlyphs">2025-02-05 05:22:09</text>
<line x1="757.27" y1="917.5" x2="757.27" y2="921.2" stroke="#333" stroke-width="1"/>
<text x="762.31" y="931.7" text-anchor="middle" class="ax" textLength="99.5" lengthAdjust="spacingAndGlyphs">2025-02-07 08:57:31</text>
<line x1="888.22" y1="917.5" x2="888.22" y2="921.2" stroke="#333" stroke-width="1"/>
<text x="893.25" y="931.7" text-anchor="middle" class="ax" textLength="99.5" lengthAdjust="spacingAndGlyphs">2025-02-09 12:31:37</text>
<line x1="1019.16" y1="917.5" x2="1019.16" y2="921.2" stroke="#333" stroke-width="1"/>
<text x="1024.20" y="931.7" text-anchor="middle" class="ax" textLength="99.5" lengthAdjust="spacingAndGlyphs">2025-02-12 04:20:21</text>
<line x1="1150.10" y1="917.5" x2="1150.10" y2="921.2" stroke="#333" stroke-width="1"/>
<text x="1155.14" y="931.7" text-anchor="middle" class="ax" textLength="99.5" lengthAdjust="spacingAndGlyphs">2025-02-14 07:58:34</text>
<line x1="1281.05" y1="917.5" x2="1281.05" y2="921.2" stroke="#333" stroke-width="1"/>
<text x="1286.08" y="931.7" text-anchor="middle" class="ax" textLength="99.5" lengthAdjust="spacingAndGlyphs">2025-02-15 10:19:13</text>
<line x1="1411.99" y1="917.5" x2="1411.99" y2="921.2" stroke="#333" stroke-width="1"/>
<text x="1417.03" y="931.7" text-anchor="middle" class="ax" textLength="99.5" lengthAdjust="spacingAndGlyphs">2025-02-16 20:44:25</text>
<line x1="1482.5" y1="917.5" x2="1482.5" y2="921.2" stroke="#333" stroke-width="1"/>
<g filter="url(#sh)"><polyline points="238.54,704.10 248.61,706.51 258.68,706.51 268.75,706.51 278.83,706.51 288.90,704.90 298.97,704.10 309.04,704.50 319.12,704.50 329.19,705.91 339.26,706.11 349.33,706.11 359.41,706.11 369.48,704.70 379.55,705.51 389.62,706.31 399.70,706.31 409.77,704.90 419.84,706.31 429.92,704.90 439.99,704.30 450.06,704.10 460.13,704.50 470.21,704.50 480.28,704.70 490.35,704.70 500.42,706.11 510.50,704.70 520.57,704.70 530.64,704.30 540.71,703.69 550.79,704.10 560.86,704.30 570.93,704.30 581.00,704.30 591.08,704.30 601.15,703.49 611.22,704.10 621.29,703.89 631.37,704.70 641.44,704.10 651.51,703.89 661.58,704.10 671.66,704.10 681.73,704.30 691.80,704.50 701.88,704.50 711.95,703.69 722.02,704.30 732.09,703.69 742.17,704.50 752.24,703.69 762.31,704.30 772.38,704.10 782.46,704.10 792.53,704.30 802.60,704.50 812.67,704.70 822.75,703.69 832.82,704.10 842.89,704.10 852.96,704.10 863.04,704.50 873.11,704.70 883.18,704.50 893.25,704.30 903.33,704.10 913.40,703.69 923.47,704.50 933.54,704.70 943.62,704.10 953.69,704.30 963.76,703.89 973.83,704.10 983.91,704.30 993.98,703.69 1004.05,704.10 1014.12,703.89 1024.20,704.30 1034.27,704.30 1044.34,703.69 1054.42,703.49 1064.49,703.09 1074.56,704.10 1084.63,704.30 1094.71,704.30 1104.78,704.10 1114.85,703.09 1124.92,703.89 1135.00,703.69 1145.07,704.10 1155.14,704.50 1165.21,703.69 1175.29,703.69 1185.36,703.69 1195.43,704.30 1205.50,703.29 1215.58,704.10 1225.65,705.51 1235.72,704.10 1245.79,704.90 1255.87,705.51 1265.94,704.70 1276.01,705.51 1286.08,705.30 1296.16,704.90 1306.23,704.90 1316.30,704.10 1326.38,704.10 1336.45,704.10 1346.52,704.10 1356.59,704.30 1366.67,704.30 1376.74,704.10 1386.81,704.10 1396.88,703.89 1406.96,703.29 1417.03,704.10 1427.10,704.10 1437.17,703.49 1447.25,704.10 1457.32,703.49 1467.39,704.10 1477.46,704.10" fill="none" stroke="#638ef6" stroke-width="1" stroke-opacity="0.6" stroke-linejoin="bevel"/>
<circle cx="238.54" cy="704.10" r="2.2" fill="#638ef6"/>
<circle cx="248.61" cy="706.51" r="2.2" fill="#638ef6"/>
<circle cx="258.68" cy="706.51" r="2.2" fill="#638ef6"/>
<circle cx="268.75" cy="706.51" r="2.2" fill="#638ef6"/>
<circle cx="278.83" cy="706.51" r="2.2" fill="#638ef6"/>
<circle cx="288.90" cy="704.90" r="2.2" fill="#638ef6"/>
<circle cx="298.97" cy="704.10" r="2.2" fill="#638ef6"/>
<circle cx="309.04" cy="704.50" r="2.2" fill="#638ef6"/>
<circle cx="319.12" cy="704.50" r="2.2" fill="#638ef6"/>
<circle cx="329.19" cy="705.91" r="2.2" fill="#638ef6"/>
<circle cx="339.26" cy="706.11" r="2.2" fill="#638ef6"/>
<circle cx="349.33" cy="706.11" r="2.2" fill="#638ef6"/>
<circle cx="359.41" cy="706.11" r="2.2" fill="#638ef6"/>
<circle cx="369.48" cy="704.70" r="2.2" fill="#638ef6"/>
<circle cx="379.55" cy="705.51" r="2.2" fill="#638ef6"/>
<circle cx="389.62" cy="706.31" r="2.2" fill="#638ef6"/>
<circle cx="399.70" cy="706.31" r="2.2" fill="#638ef6"/>
<circle cx="409.77" cy="704.90" r="2.2" fill="#638ef6"/>
<circle cx="419.84" cy="706.31" r="2.2" fill="#638ef6"/>
<circle cx="429.92" cy="704.90" r="2.2" fill="#638ef6"/>
<circle cx="439.99" cy="704.30" r="2.2" fill="#638ef6"/>
<circle cx="450.06" cy="704.10" r="2.2" fill="#638ef6"/>
<circle cx="460.13" cy="704.50" r="2.2" fill="#638ef6"/>
<circle cx="470.21" cy="704.50" r="2.2" fill="#638ef6"/>
<circle cx="480.28" cy="704.70" r="2.2" fill="#638ef6"/>
<circle cx="490.35" cy="704.70" r="2.2" fill="#638ef6"/>
<circle cx="500.42" cy="706.11" r="2.2" fill="#638ef6"/>
<circle cx="510.50" cy="704.70" r="2.2" fill="#638ef6"/>
<circle cx="520.57" cy="704.70" r="2.2" fill="#638ef6"/>
<circle cx="530.64" cy="704.30" r="2.2" fill="#638ef6"/>
<circle cx="540.71" cy="703.69" r="2.2" fill="#638ef6"/>
<circle cx="550.79" cy="704.10" r="2.2" fill="#638ef6"/>
<circle cx="560.86" cy="704.30" r="2.2" fill="#638ef6"/>
<circle cx="570.93" cy="704.30" r="2.2" fill="#638ef6"/>
<circle cx="581.00" cy="704.30" r="2.2" fill="#638ef6"/>
<circle cx="591.08" cy="704.30" r="2.2" fill="#638ef6"/>
<circle cx="601.15" cy="703.49" r="2.2" fill="#638ef6"/>
<circle cx="611.22" cy="704.10" r="2.2" fill="#638ef6"/>
<circle cx="621.29" cy="703.89" r="2.2" fill="#638ef6"/>
<circle cx="631.37" cy="704.70" r="2.2" fill="#638ef6"/>
<circle cx="641.44" cy="704.10" r="2.2" fill="#638ef6"/>
<circle cx="651.51" cy="703.89" r="2.2" fill="#638ef6"/>
<circle cx="661.58" cy="704.10" r="2.2" fill="#638ef6"/>
<circle cx="671.66" cy="704.10" r="2.2" fill="#638ef6"/>
<circle cx="681.73" cy="704.30" r="2.2" fill="#638ef6"/>
<circle cx="691.80" cy="704.50" r="2.2" fill="#638ef6"/>
<circle cx="701.88" cy="704.50" r="2.2" fill="#638ef6"/>
<circle cx="711.95" cy="703.69" r="2.2" fill="#638ef6"/>
<circle cx="722.02" cy="704.30" r="2.2" fill="#638ef6"/>
<circle cx="732.09" cy="703.69" r="2.2" fill="#638ef6"/>
<circle cx="742.17" cy="704.50" r="2.2" fill="#638ef6"/>
<circle cx="752.24" cy="703.69" r="2.2" fill="#638ef6"/>
<circle cx="762.31" cy="704.30" r="2.2" fill="#638ef6"/>
<circle cx="772.38" cy="704.10" r="2.2" fill="#638ef6"/>
<circle cx="782.46" cy="704.10" r="2.2" fill="#638ef6"/>
<circle cx="792.53" cy="704.30" r="2.2" fill="#638ef6"/>
<circle cx="802.60" cy="704.50" r="2.2" fill="#638ef6"/>
<circle cx="812.67" cy="704.70" r="2.2" fill="#638ef6"/>
<circle cx="822.75" cy="703.69" r="2.2" fill="#638ef6"/>
<circle cx="832.82" cy="704.10" r="2.2" fill="#638ef6"/>
<circle cx="842.89" cy="704.10" r="2.2" fill="#638ef6"/>
<circle cx="852.96" cy="704.10" r="2.2" fill="#638ef6"/>
<circle cx="863.04" cy="704.50" r="2.2" fill="#638ef6"/>
<circle cx="873.11" cy="704.70" r="2.2" fill="#638ef6"/>
<circle cx="883.18" cy="704.50" r="2.2" fill="#638ef6"/>
<circle cx="893.25" cy="704.30" r="2.2" fill="#638ef6"/>
<circle cx="903.33" cy="704.10" r="2.2" fill="#638ef6"/>
<circle cx="913.40" cy="703.69" r="2.2" fill="#638ef6"/>
<circle cx="923.47" cy="704.50" r="2.2" fill="#638ef6"/>
<circle cx="933.54" cy="704.70" r="2.2" fill="#638ef6"/>
<circle cx="943.62" cy="704.10" r="2.2" fill="#638ef6"/>
<circle cx="953.69" cy="704.30" r="2.2" fill="#638ef6"/>
<circle cx="963.76" cy="703.89" r="2.2" fill="#638ef6"/>
<circle cx="973.83" cy="704.10" r="2.2" fill="#638ef6"/>
<circle cx="983.91" cy="704.30" r="2.2" fill="#638ef6"/>
<circle cx="993.98" cy="703.69" r="2.2" fill="#638ef6"/>
<circle cx="1004.05" cy="704.10" r="2.2" fill="#638ef6"/>
<circle cx="1014.12" cy="703.89" r="2.2" fill="#638ef6"/>
<circle cx="1024.20" cy="704.30" r="2.2" fill="#638ef6"/>
<circle cx="1034.27" cy="704.30" r="2.2" fill="#638ef6"/>
<circle cx="1044.34" cy="703.69" r="2.2" fill="#638ef6"/>
<circle cx="1054.42" cy="703.49" r="2.2" fill="#638ef6"/>
<circle cx="1064.49" cy="703.09" r="2.2" fill="#638ef6"/>
<circle cx="1074.56" cy="704.10" r="2.2" fill="#638ef6"/>
<circle cx="1084.63" cy="704.30" r="2.2" fill="#638ef6"/>
<circle cx="1094.71" cy="704.30" r="2.2" fill="#638ef6"/>
<circle cx="1104.78" cy="704.10" r="2.2" fill="#638ef6"/>
<circle cx="1114.85" cy="703.09" r="2.2" fill="#638ef6"/>
<circle cx="1124.92" cy="703.89" r="2.2" fill="#638ef6"/>
<circle cx="1135.00" cy="703.69" r="2.2" fill="#638ef6"/>
<circle cx="1145.07" cy="704.10" r="2.2" fill="#638ef6"/>
<circle cx="1155.14" cy="704.50" r="2.2" fill="#638ef6"/>
<circle cx="1165.21" cy="703.69" r="2.2" fill="#638ef6"/>
<circle cx="1175.29" cy="703.69" r="2.2" fill="#638ef6"/>
<circle cx="1185.36" cy="703.69" r="2.2" fill="#638ef6"/>
<circle cx="1195.43" cy="704.30" r="2.2" fill="#638ef6"/>
<circle cx="1205.50" cy="703.29" r="2.2" fill="#638ef6"/>
<circle cx="1215.58" cy="704.10" r="2.2" fill="#638ef6"/>
<circle cx="1225.65" cy="705.51" r="2.2" fill="#638ef6"/>
<circle cx="1235.72" cy="704.10" r="2.2" fill="#638ef6"/>
<circle cx="1245.79" cy="704.90" r="2.2" fill="#638ef6"/>
<circle cx="1255.87" cy="705.51" r="2.2" fill="#638ef6"/>
<circle cx="1265.94" cy="704.70" r="2.2" fill="#638ef6"/>
<circle cx="1276.01" cy="705.51" r="2.2" fill="#638ef6"/>
<circle cx="1286.08" cy="705.30" r="2.2" fill="#638ef6"/>
<circle cx="1296.16" cy="704.90" r="2.2" fill="#638ef6"/>
<circle cx="1306.23" cy="704.90" r="2.2" fill="#638ef6"/>
<circle cx="1316.30" cy="704.10" r="2.2" fill="#638ef6"/>
<circle cx="1326.38" cy="704.10" r="2.2" fill="#638ef6"/>
<circle cx="1336.45" cy="704.10" r="2.2" fill="#638ef6"/>
<circle cx="1346.52" cy="704.10" r="2.2" fill="#638ef6"/>
<circle cx="1356.59" cy="704.30" r="2.2" fill="#638ef6"/>
<circle cx="1366.67" cy="704.30" r="2.2" fill="#638ef6"/>
<circle cx="1376.74" cy="704.10" r="2.2" fill="#638ef6"/>
<circle cx="1386.81" cy="704.10" r="2.2" fill="#638ef6"/>
<circle cx="1396.88" cy="703.89" r="2.2" fill="#638ef6"/>
<circle cx="1406.96" cy="703.29" r="2.2" fill="#638ef6"/>
<circle cx="1417.03" cy="704.10" r="2.2" fill="#638ef6"/>
<circle cx="1427.10" cy="704.10" r="2.2" fill="#638ef6"/>
<circle cx="1437.17" cy="703.49" r="2.2" fill="#638ef6"/>
<circle cx="1447.25" cy="704.10" r="2.2" fill="#638ef6"/>
<circle cx="1457.32" cy="703.49" r="2.2" fill="#638ef6"/>
<circle cx="1467.39" cy="704.10" r="2.2" fill="#638ef6"/>
<circle cx="1477.46" cy="704.10" r="2.2" fill="#638ef6"/>
</g>
<text x="852" y="634" text-anchor="middle" class="ttl">电量监控</text>
<line x1="790.1" y1="941.6" x2="811.1" y2="941.6" stroke="#638ef6" stroke-width="1.8"/>
<circle cx="800.6" cy="941.6" r="4.9" fill="#638ef6"/>
<text x="816.1" y="945.3000000000001" class="lg">202501110003(电量)</text>
</svg>
</body>
</html>
